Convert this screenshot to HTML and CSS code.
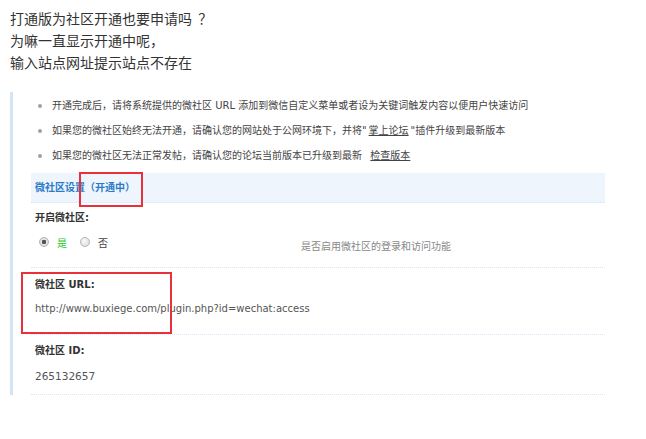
FILE: index.html
```html
<!DOCTYPE html>
<html lang="zh-CN">
<head>
    <meta charset="UTF-8">
    <meta name="viewport" content="width=device-width, initial-scale=1.0">
    <title>打通版为社区开通也要申请吗</title>
    <link rel="stylesheet" href="styles.css">
</head>
<body>
    <div class="question">
        <p>打通版为社区开通也要申请吗&nbsp; ？</p>
        <p>为嘛一直显示开通中呢，</p>
        <p>输入站点网址提示站点不存在</p>
    </div>

    <div class="shot">
        <ul class="tips">
            <li>开通完成后，请将系统提供的微社区 URL 添加到微信自定义菜单或者设为关键词触发内容以便用户快速访问</li>
            <li>如果您的微社区始终无法开通，请确认您的网站处于公网环境下，并将" <a href="#">掌上论坛</a> "插件升级到最新版本</li>
            <li>如果您的微社区无法正常发帖，请确认您的论坛当前版本已升级到最新 &nbsp;<a href="#">检查版本</a></li>
        </ul>

        <div class="setting">
            <div class="setting-title">微社区设置（开通中）</div>

            <div class="row row-enable">
                <div class="label">开启微社区:</div>
                <div class="option-line">
                    <div class="options">
                        <span class="radio checked"></span><span class="yes">是</span>
                        <span class="radio"></span><span class="no">否</span>
                    </div>
                    <div class="desc">是否启用微社区的登录和访问功能</div>
                </div>
            </div>

            <div class="row row-url">
                <div class="label">微社区 URL:</div>
                <div class="value">http://www.buxiege.com/plugin.php?id=wechat:access</div>
            </div>

            <div class="row row-id">
                <div class="label">微社区 ID:</div>
                <div class="value id-value">265132657</div>
            </div>
        </div>

        <div class="mark mark-status"></div>
        <div class="mark mark-url"></div>
    </div>
</body>
</html>
```

FILE: styles.css
```css
body {
    margin: 0;
    padding: 7px 10px;
    background: #fff;
    font-family: "Noto Sans CJK SC", sans-serif;
    color: #333;
}
.question p {
    margin: 0;
    font-size: 14px;
    line-height: 22px;
}
.shot {
    position: relative;
    box-sizing: border-box;
    width: 595px;
    margin-top: 19px;
    border-left: 3px solid #d3e5f5;
    font-family: "DejaVu Sans", "Noto Sans CJK SC", sans-serif;
    font-size: 10px;
    color: #444;
}
.tips {
    list-style: none;
    margin: 0 0 5px;
    padding: 1px 0 0 25px;
}
.tips li {
    display: flex;
    align-items: center;
    line-height: 25px;
    white-space: nowrap;
}
.tips li::before {
    content: "";
    width: 4px;
    height: 4px;
    margin-right: 10px;
    border-radius: 50%;
    background: #a0a0a0;
    flex-shrink: 0;
}
.tips a {
    color: #444;
    text-decoration: underline;
    margin: 0 2px;
}
.setting {
    margin: 0 0 8px 18px;
}
.setting-title {
    height: 29px;
    line-height: 29px;
    padding-left: 4px;
    background: #eef5fc;
    border-bottom: 1px dotted #d5e6f6;
    color: #2a7ac9;
    font-weight: bold;
}
.row {
    padding-left: 4px;
    border-bottom: 1px dotted #d5e6f6;
}
.label {
    line-height: 20px;
    font-weight: bold;
    color: #333;
}
.value {
    line-height: 20px;
    color: #555;
}
.row-enable {
    padding-top: 5px;
    padding-bottom: 15px;
}
.option-line {
    display: grid;
    grid-template-columns: 266px 1fr;
    height: 20px;
    margin-top: 4px;
}
.options {
    display: flex;
    align-items: center;
    height: 20px;
    padding-left: 4px;
}
.radio {
    box-sizing: border-box;
    width: 10px;
    height: 10px;
    border: 1px solid #b4b4b4;
    border-radius: 50%;
    background: radial-gradient(circle at 40% 35%, #fafafa, #d8d8d8);
}
.radio.checked {
    background: radial-gradient(circle, #555 0, #555 2px, #e6e6e6 2.5px, #d0d0d0 100%);
}
.yes {
    margin: 0 13px 0 8px;
    color: #22cc22;
}
.no {
    margin-left: 8px;
    color: #444;
}
.desc {
    padding-top: 5px;
    line-height: 20px;
    color: #888;
}
.row-url {
    padding-top: 7px;
    padding-bottom: 15px;
}
.row-url .value {
    margin-top: 4px;
}
.row-id {
    padding-top: 6px;
    padding-bottom: 8px;
}
.row-id .value {
    margin-top: 5px;
}
.id-value {
    font-size: 10.5px;
}
.mark {
    position: absolute;
    border: 2px solid #e8313a;
}
.mark-status {
    left: 66px;
    top: 80px;
    width: 60px;
    height: 31px;
}
.mark-url {
    left: 8px;
    top: 180px;
    width: 147px;
    height: 58px;
}
```
